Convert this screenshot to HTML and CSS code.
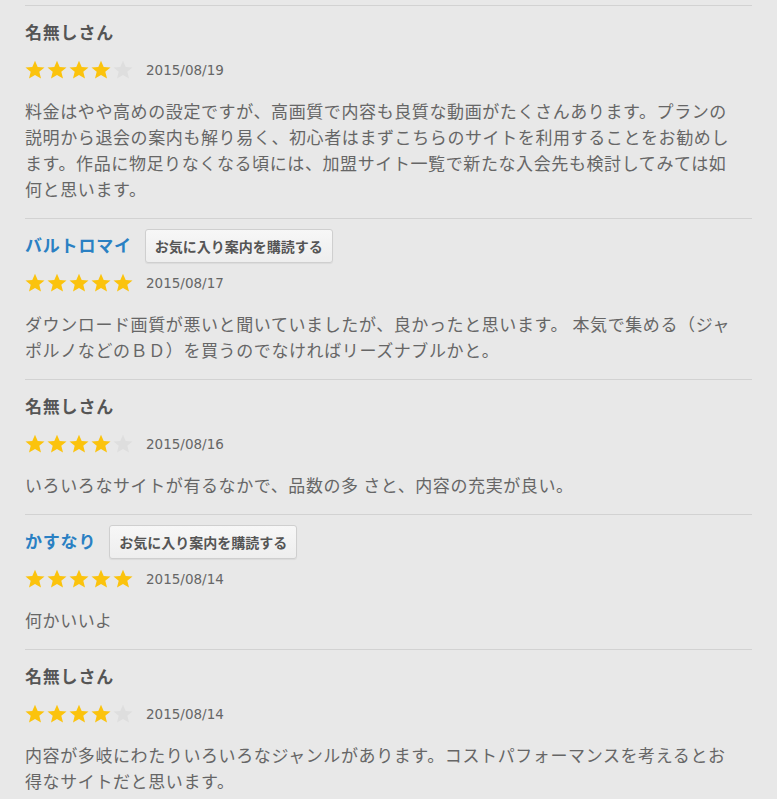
FILE: index.html
```html
<!DOCTYPE html>
<html lang="ja">
<head>
<meta charset="utf-8">
<title>レビュー</title>
<link rel="stylesheet" href="styles.css">
</head>
<body>
<svg width="0" height="0" class="defs">
  <defs>
    <symbol id="star" viewBox="0 0 20 20">
      <polygon points="10,0.8 12.7,7 19.5,7.4 14.3,11.8 16,18.6 10,14.9 4,18.6 5.7,11.8 0.5,7.4 7.3,7"/>
    </symbol>
  </defs>
</svg>
<div class="reviews">

  <div class="review">
    <div class="head"><span class="name">名無しさん</span></div>
    <div class="rating">
      <span class="stars">
        <svg class="star on"><use href="#star"/></svg><svg class="star on"><use href="#star"/></svg><svg class="star on"><use href="#star"/></svg><svg class="star on"><use href="#star"/></svg><svg class="star off"><use href="#star"/></svg>
      </span>
      <span class="date">2015/08/19</span>
    </div>
    <p class="body">料金はやや高めの設定ですが、高画質で内容も良質な動画がたくさんあります。プランの<br>説明から退会の案内も解り易く、初心者はまずこちらのサイトを利用することをお勧めし<br>ます。作品に物足りなくなる頃には、加盟サイト一覧で新たな入会先も検討してみては如<br>何と思います。</p>
  </div>

  <div class="review">
    <div class="head"><span class="name user">バルトロマイ</span><button class="subscribe">お気に入り案内を購読する</button></div>
    <div class="rating">
      <span class="stars">
        <svg class="star on"><use href="#star"/></svg><svg class="star on"><use href="#star"/></svg><svg class="star on"><use href="#star"/></svg><svg class="star on"><use href="#star"/></svg><svg class="star on"><use href="#star"/></svg>
      </span>
      <span class="date">2015/08/17</span>
    </div>
    <p class="body">ダウンロード画質が悪いと聞いていましたが、良かったと思います。 本気で集める（ジャ<br>ポルノなどのＢＤ）を買うのでなければリーズナブルかと。</p>
  </div>

  <div class="review">
    <div class="head"><span class="name">名無しさん</span></div>
    <div class="rating">
      <span class="stars">
        <svg class="star on"><use href="#star"/></svg><svg class="star on"><use href="#star"/></svg><svg class="star on"><use href="#star"/></svg><svg class="star on"><use href="#star"/></svg><svg class="star off"><use href="#star"/></svg>
      </span>
      <span class="date">2015/08/16</span>
    </div>
    <p class="body">いろいろなサイトが有るなかで、品数の多 さと、内容の充実が良い。</p>
  </div>

  <div class="review">
    <div class="head"><span class="name user">かすなり</span><button class="subscribe">お気に入り案内を購読する</button></div>
    <div class="rating">
      <span class="stars">
        <svg class="star on"><use href="#star"/></svg><svg class="star on"><use href="#star"/></svg><svg class="star on"><use href="#star"/></svg><svg class="star on"><use href="#star"/></svg><svg class="star on"><use href="#star"/></svg>
      </span>
      <span class="date">2015/08/14</span>
    </div>
    <p class="body">何かいいよ</p>
  </div>

  <div class="review">
    <div class="head"><span class="name">名無しさん</span></div>
    <div class="rating">
      <span class="stars">
        <svg class="star on"><use href="#star"/></svg><svg class="star on"><use href="#star"/></svg><svg class="star on"><use href="#star"/></svg><svg class="star on"><use href="#star"/></svg><svg class="star off"><use href="#star"/></svg>
      </span>
      <span class="date">2015/08/14</span>
    </div>
    <p class="body">内容が多岐にわたりいろいろなジャンルがあります。コストパフォーマンスを考えるとお<br>得なサイトだと思います。</p>
  </div>

</div>
</body>
</html>
```
FILE: styles.css
```css
html, body {
  margin: 0;
  padding: 0;
  background: #e8e8e8;
}
body {
  font-family: "Noto Sans CJK JP", "Noto Sans", sans-serif;
  color: #666;
}
.defs {
  position: absolute;
  width: 0;
  height: 0;
}
.reviews {
  margin: 0 25px;
  padding-top: 5px;
  width: 727px;
}
.review {
  border-top: 1px solid #d2d2d2;
  padding: 10px 0 16px;
}
.head {
  display: flex;
  align-items: center;
  height: 34px;
  gap: 13px;
}
.name {
  font-size: 17px;
  font-weight: bold;
  color: #555;
  letter-spacing: 0.8px;
  padding-bottom: 3px;
}
.name.user {
  color: #2a80c3;
}
.subscribe {
  height: 34px;
  padding: 0 9px;
  font-family: "Noto Sans CJK JP", "Noto Sans", sans-serif;
  font-size: 14px;
  font-weight: bold;
  color: #555;
  background: linear-gradient(#f7f7f7, #eeeeee);
  border: 1px solid #cfcfcf;
  border-radius: 3px;
  box-shadow: 0 1px 1px rgba(0,0,0,0.06);
}
.rating {
  display: flex;
  align-items: center;
  height: 20px;
  margin-top: 10px;
}
.stars {
  display: flex;
  gap: 2px;
}
.star {
  width: 20px;
  height: 20px;
  display: block;
}
.star.on { fill: #fbc30d; }
.star.off { fill: #dedede; }
.date {
  margin-left: 13px;
  font-family: "DejaVu Sans", sans-serif;
  font-size: 13.5px;
  color: #666;
}
.body {
  margin: 18px 0 0;
  font-size: 17px;
  line-height: 26px;
  letter-spacing: 0.6px;
  color: #666;
}
```
